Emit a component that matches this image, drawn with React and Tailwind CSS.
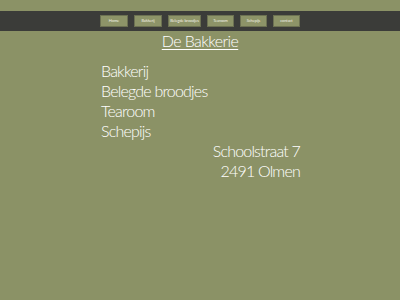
const links = [
  { label: "Home", w: "w-[28px]" },
  { label: "Bakkerij", w: "w-[28px]" },
  { label: "Belegde broodjes", w: "w-[33px]" },
  { label: "Tearoom", w: "w-[27px]" },
  { label: "Schepijs", w: "w-[27px]" },
  { label: "contact", w: "w-[27px]" },
];

const items = ["Bakkerij", "Belegde broodjes", "Tearoom", "Schepijs"];

export default function App() {
  return (
    <div className="h-[300px] bg-[#8b9266] pt-[11px] font-['Lato',sans-serif] text-white">
      {/* nav */}
      <nav className="flex h-[20px] items-center justify-center gap-[6px] bg-[#3b3c39]">
        {links.map((l) => (
          <a
            key={l.label}
            href="#"
            className={`${l.w} flex h-[12px] items-center justify-center border border-[#6c7152] bg-[#8d9468] text-[4px] leading-none tracking-[-0.1px] text-[#eef0e4] whitespace-nowrap`}
          >
            {l.label}
          </a>
        ))}
      </nav>

      <h1 className="text-center text-[16px] leading-[20px] font-light tracking-[-0.6px] underline underline-offset-[2px]">
        De Bakkerie
      </h1>

      <div className="mx-auto mt-[10px] w-[202px] text-[16px] leading-[20px] font-light tracking-[-0.8px]">
        <ul className="pl-[2px]">
          {items.map((i) => (
            <li key={i}>{i}</li>
          ))}
        </ul>
        <div className="text-right">
          <p className="pr-[1px]">Schoolstraat 7</p>
          <p className="pr-[1px]">2491 Olmen</p>
        </div>
      </div>
    </div>
  );
}
